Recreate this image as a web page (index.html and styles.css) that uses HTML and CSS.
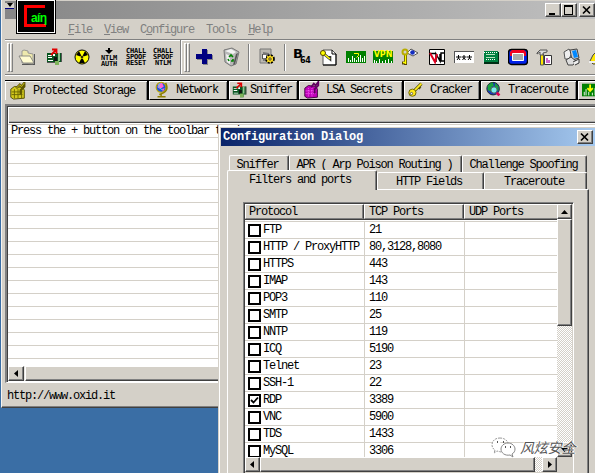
FILE: index.html
```html
<!DOCTYPE html>
<html lang="en">
<head>
<meta charset="utf-8">
<title>Cain</title>
<link rel="stylesheet" href="styles.css">
</head>
<body>
<div class="desktop">
<main class="window">
  <header class="titlebar">
    <i class="sysmenu"></i>
    <span class="winbtns"><b><svg width="14" height="13" viewBox="0 0 14 13"><path d="M3 9h6v2H3z"/></svg></b><b><svg width="14" height="13" viewBox="0 0 14 13"><path d="M2 1h9v10H2zM3 3v7h7V3z" fill-rule="evenodd"/></svg></b><b class="close"><svg width="14" height="13" viewBox="0 0 14 13"><path d="M3 2.500l7 7M10 2.500l-7 7" stroke="#000" stroke-width="1.700"/></svg></b></span>
  </header>
  <div class="logo"><svg width="40" height="34" viewBox="0 0 40 34"><path d="M29 7.500H9.500V26.500H30" fill="none" stroke="#f00" stroke-width="3"/></svg><span>aíη</span></div>
  <nav class="menu"><span><u>F</u>ile</span><span><u>V</u>iew</span><span>C<u>o</u>nfigure</span><span>Tools</span><span><u>H</u>elp</span></nav>
  <div class="toolbar">
    <i class="grip"></i><i class="grip"></i>
    <div class="group first">
      <svg class="ic" viewBox="0 0 20 20"><path d="M4 17h12V7h1v11H4z" fill="#555"/><path d="M4 16V4l2-1 4 1v2l5 1v10z" fill="#eee9ad" stroke="#888" stroke-width=".8"/><path d="M1 9h11l4 7H5z" fill="#fffbd0" stroke="#777" stroke-width=".8"/></svg>
      <svg class="ic" viewBox="0 0 20 20"><path d="M2 6h15v9h-3v3h-4v-3H2z" fill="#07551f"/><path d="M3 8h4v1H3zM3 10h4v1H3zM3 13h5v1H3zM8 7h2v2H8z" fill="#fff"/><path d="M9 10h3v4H9z" fill="#111"/><path d="M13 6h2v8h-2z" fill="#8fc28f"/><path d="M16 6h1v9h-1zM2 15h8v1H2z" fill="#555"/><path d="M10 14h4v4h-4z" fill="#7fb45c"/><path d="M6 8l5-5M7 2.500h4.500V7" fill="none" stroke="#e00000" stroke-width="1.800"/></svg>
      <svg class="ic" viewBox="0 0 20 20"><circle cx="10" cy="10" r="7" fill="#ff0" stroke="#000"/><path d="M10 10L4 8l3-4zM10 10l6-2-3-4zM10 10l-3 6h6z"/><circle cx="10" cy="10" r="1.500" stroke="#ff0" stroke-width=".6"/></svg>
      <span class="tiny ntlm"><svg width="8" height="6" viewBox="0 0 8 6"><path d="M3 0h2v2h3L4 6 0 2h3z"/></svg>NTLM<br>AUTH</span>
      <span class="tiny">CHALL<br>SPOOF<br>RESET</span>
      <span class="tiny">CHALL<br>SPOOF<br>NTLM</span>
    </div>
    <i class="sep split"></i><i class="grip"></i><i class="grip"></i>
    <div class="group second">
      <svg class="ic" viewBox="0 0 20 20"><path d="M9 3h5v5h5v5h-5v5H9v-5H3V8h6z" fill="#888"/><path d="M8 2h5v5h5v5h-5v5H8v-5H2V7h6z" fill="#000080"/></svg>
      <svg class="ic" viewBox="0 0 20 20"><path d="M3 3l8-2 7 4-3 12-5 2-6-4z" fill="#b8b8b8" stroke="#777"/><path d="M4 4l6-2 5 3-3 2zM5 7l4 2v8l-3-2z" fill="#f2f2f2"/><path d="M15 7l2-1-3 11-2 1z" fill="#555"/><path d="M8 10l2-2 2 2m0 2v2h-2m-2 0l-1-2" fill="none" stroke="#008000" stroke-width="1.600"/></svg>
    </div>
    <i class="sep"></i>
    <svg class="ic lone" viewBox="0 0 20 20"><path d="M3 2h11v14H3z" fill="#bbb8b1" stroke="#777"/><path d="M5 7h4v5H5z" fill="#555"/><path d="M6 5l6 1v7l-6 1z" fill="#777"/><circle cx="13" cy="12" r="4" fill="#ffdf20" stroke="#000" stroke-width="1.700" stroke-dasharray="2 1.200"/><circle cx="13" cy="12" r="1.200" fill="#ddd" stroke="#554500"/><path d="M6 8h3v3H6z" fill="#fff"/></svg>
    <i class="sep"></i>
    <div class="group third">
      <span class="b64"><b>B</b><small>64</small></span>
      <svg class="ic" viewBox="0 0 20 20"><path d="M4 3h9l4 4v11H4z" fill="#fff" stroke="#555"/><path d="M13 3v4h4v11H4" fill="none" stroke="#000"/><path d="M5 7l6 5v-3" stroke="#333" stroke-width="2.600" fill="none"/><path d="M5 7l6 5" stroke="#ff0" stroke-width="1.500"/><circle cx="4" cy="6" r="2.500" fill="#ff0" stroke="#554500"/></svg>
      <svg class="ic" viewBox="0 0 20 20"><path d="M0 4h20v12H0z" fill="#008000"/><path d="M2.500 15v-4M4.500 15v-2M6.500 15V9M8.500 15v-4M10.500 15v-2M12.500 15v-5M14.500 15V8M16.500 15v-4M18.500 15v-6" stroke="#fff"/><path d="M8 6.500h4.500v2l-2 2" stroke="#ff0" fill="none"/></svg>
      <span class="vpn"><b>VPN</b><svg width="20" height="4" viewBox="0 0 20 4"><path d="M1.500 4V1M3.500 4V2M6.500 4V0M9.500 4V2M12.500 4V1M15.500 4V0M18.500 4V2" stroke="#fff"/></svg></span>
      <svg class="ic" viewBox="0 0 20 20"><path d="M7 6l4-4 7 4-5 3z" fill="#fff" stroke="#555"/><circle cx="12.500" cy="5.500" r="2.300" fill="#142dc0"/><path d="M5.500 7v11M5 16H2" stroke="#554500" stroke-width="3"/><path d="M5.500 7v10M5 15.500H3" stroke="#ff0" stroke-width="1.500"/><circle cx="5" cy="5" r="2.500" fill="none" stroke="#b8ac00" stroke-width="2"/></svg>
      <svg class="ic" viewBox="0 0 20 20"><path d="M2.500 2.500h15v15h-15z" fill="#fff" stroke="#000"/><path d="M3 6.500h6M9 15V7l4 7V7M18 6h-4v8h4" fill="none" stroke="#000" stroke-width="1.500"/><path d="M3 6l5 9 2-8" fill="none" stroke="#e00020" stroke-width="2"/></svg>
      <svg class="ic" viewBox="0 0 20 20"><path d="M0 4h20v12H0z" fill="#fff"/><path d="M0 4.500h20M.5 4v12" stroke="#555"/><path d="M2 10h5M4.500 8v3M3 13l1.500-2L6 13M7.500 10h5M10 8v3M8.500 13l1.500-2 1.500 2M13 10h5M15.500 8v3M14 13l1.500-2 1.500 2" stroke="#000" fill="none"/></svg>
      <svg class="ic" viewBox="0 0 20 20"><path d="M3 5h15v12H3z" fill="#002f15"/><path d="M2 4h15v11H2z" fill="#008040"/><path d="M3 5.500h13M5 12.500h9" stroke="#fff" stroke-dasharray="1 1"/><path d="M5 7.500h9M5 10.500h9" stroke="#b8e2be"/><path d="M2.500 4v12" stroke="#ddd"/></svg>
      <svg class="ic" viewBox="0 0 20 20"><rect x=".5" y="2.500" width="19" height="15" rx="3" fill="#0020e8" stroke="#000" stroke-width="1.400"/><path d="M2 9V5l2-2h12l2 2v4z" fill="#f00020"/><path d="M4.500 6.500h11v7h-11z" fill="#aaa" stroke="#fff"/></svg>
      <svg class="ic" viewBox="0 0 20 20"><path d="M5.500 7h3v11h-3z" fill="#ffe800" stroke="#555"/><path d="M2 6l3-3h7v2L8 6v2H5V5L2 7z" fill="#ddd" stroke="#555"/><path d="M9.500 8.500h7v9h-7z" fill="#fff" stroke="#333"/><path d="M12 16v-5M14 16v-3" stroke="#b000b0" stroke-width="1.200"/></svg>
      <svg class="ic" viewBox="0 0 20 20"><path d="M2 5l5-3 3 4-3 6H3z" fill="#eee" stroke="#555"/><path d="M8 3l7-1 2 9-7 2z" fill="#ccc" stroke="#444"/><path d="M10 4l4-1 2 7-4 1z" fill="#08f"/><path d="M4 13l5-3 5 4-3 4H6z" fill="#ddd" stroke="#444"/><path d="M11 15l6-3v4l-4 2" fill="#eee" stroke="#333"/></svg>
      <svg class="ic" viewBox="0 0 20 20"><path d="M4 8l4-4v13H4l-3-3z" fill="#ffe800" stroke="#444"/><path d="M0 15h10" stroke="#eee" stroke-width="2"/></svg>
    </div>
  </div>
  <div class="tabs">
    <div class="tab t1"><svg class="ic" viewBox="0 0 20 20"><path d="M2 8l4-3 9 1 2 3v9l-12 1-3-2z" fill="#d4ca1d" stroke="#4c4700"/><path d="M3 11h12M3 14h12M6 8v10M10 8v10M14 8v10" stroke="#6a6500"/><path d="M8 7l4-4 2 2 3-4v4l-4 4v5" fill="none" stroke="#5e5700" stroke-width="2.500"/><path d="M8 7l4-4 2 2 3-4" fill="none" stroke="#d4ca1d"/></svg><span>Protected Storage</span></div>
    <div class="tab t2"><svg class="ic" viewBox="0 0 20 20"><circle cx="9" cy="7" r="5.500" fill="#1b55df" stroke="#bca900" stroke-width="1.300"/><path d="M6 3l4-1 2 4-4 3-3-2zM10 9l3-1-2 4z" fill="#ff62d2"/><path d="M8 2l-2 4 4 4" stroke="#3fe5e0" fill="none"/><path d="M14 2q5 10-7 13M9 14v3M5 17.500h9" fill="none" stroke="#8d7f00" stroke-width="1.700"/></svg><span>Network</span></div>
    <div class="tab t3"><svg class="ic" viewBox="0 0 20 20"><path d="M2 6h15v9h-3v3h-4v-3H2z" fill="#07551f"/><path d="M3 8h4v1H3zM3 10h4v1H3zM3 13h5v1H3zM8 7h2v2H8z" fill="#fff"/><path d="M9 10h3v4H9z" fill="#111"/><path d="M13 6h2v8h-2z" fill="#8fc28f"/><path d="M16 6h1v9h-1z" fill="#555"/><path d="M10 14h4v4h-4z" fill="#7fb45c"/><path d="M6 8l5-5M7 2.500h4.500V7" fill="none" stroke="#e00000" stroke-width="1.800"/></svg><span>Sniffer</span></div>
    <div class="tab t4"><svg class="ic" viewBox="0 0 20 20"><path d="M2 8l4-3 8 1 2 3v9l-11 1-3-2z" fill="#c000b8" stroke="#390038"/><path d="M3 11h12M3 14h12M6 8v10M10 8v10" stroke="#ff71ff" stroke-dasharray="1 1"/><path d="M9 7l3-4 2 2 3-4v4l-4 4v5" fill="none" stroke="#600060" stroke-width="2"/></svg><span>LSA Secrets</span></div>
    <div class="tab t5"><svg class="ic" viewBox="0 0 20 20"><path d="M8 11l8-8M12 6l3 2" stroke="#554f00" stroke-width="3.500"/><path d="M8 11l8-8" stroke="#ffed20" stroke-width="2"/><circle cx="6" cy="13" r="4" fill="#ffe818" stroke="#655d00"/><circle cx="5" cy="14" r="1.300" fill="#fff" stroke="#555"/></svg><span>Cracker</span></div>
    <div class="tab t6"><svg class="ic" viewBox="0 0 20 20"><circle cx="9" cy="8.500" r="7" fill="#1739b8" stroke="#222"/><path d="M3 5l5-4 2 4-3 2v5l-4-2zM11 2l4 4v5l-4-2z" fill="#17a23b"/><circle cx="10" cy="10" r="3.500" fill="#76efed" stroke="#555"/><path d="M13 13l3 3" stroke="#e00050" stroke-width="3"/></svg><span>Traceroute</span></div>
    <div class="tab t7"><svg class="ic" viewBox="0 0 20 20"><path d="M0 3h20v14H0z" fill="#008000"/><path d="M2.500 16v-4M4.500 16v-7M7.500 16v-4M11.500 16v-3M14.500 16V8" stroke="#fff"/><path d="M9 4v6M6 8l3 3 3-3" stroke="#ff0" stroke-width="2" fill="none"/></svg></div>
  </div>
  <section class="listview">
    <div class="lhead"></div>
    <div class="lrows"><p>Press the + button on the toolbar to dump</p></div>
    <div class="hscroll"><b class="sb"><svg width="15" height="14" viewBox="0 0 15 14"><path d="M9 3v7L5 6.500z"/></svg></b><b class="thumb"></b></div>
  </section>
  <footer>http://www.oxid.it</footer>
</main>

<section class="dialog">
  <header><span>Configuration Dialog</span><b class="close"><svg width="14" height="13" viewBox="0 0 14 13"><path d="M3 2.500l7 7M10 2.500l-7 7" stroke="#000" stroke-width="1.700"/></svg></b></header>
  <div class="dtabs upper"><span>Sniffer</span><span>APR ( Arp Poison Routing )</span><span>Challenge Spoofing</span></div>
  <div class="dtabs lower"><span class="active">Filters and ports</span><span>HTTP Fields</span><span>Traceroute</span></div>
  <div class="panel">
    <div class="table">
      <div class="viewport">
        <div class="thead"><span>Protocol</span><span>TCP Ports</span><span>UDP Ports</span></div>
        <div class="tbody">
          <div class="row"><span><i class="cb"></i>FTP</span><span>21</span><span></span></div>
          <div class="row"><span><i class="cb"></i>HTTP / ProxyHTTP</span><span>80,3128,8080</span><span></span></div>
          <div class="row"><span><i class="cb"></i>HTTPS</span><span>443</span><span></span></div>
          <div class="row"><span><i class="cb"></i>IMAP</span><span>143</span><span></span></div>
          <div class="row"><span><i class="cb"></i>POP3</span><span>110</span><span></span></div>
          <div class="row"><span><i class="cb"></i>SMTP</span><span>25</span><span></span></div>
          <div class="row"><span><i class="cb"></i>NNTP</span><span>119</span><span></span></div>
          <div class="row"><span><i class="cb"></i>ICQ</span><span>5190</span><span></span></div>
          <div class="row"><span><i class="cb"></i>Telnet</span><span>23</span><span></span></div>
          <div class="row"><span><i class="cb"></i>SSH-1</span><span>22</span><span></span></div>
          <div class="row"><span><i class="cb"><svg width="9" height="9" viewBox="0 0 9 9"><path d="M1 4l2.500 2.500L8 1.500" fill="none" stroke="#000" stroke-width="1.800"/></svg></i>RDP</span><span>3389</span><span></span></div>
          <div class="row"><span><i class="cb"></i>VNC</span><span>5900</span><span></span></div>
          <div class="row"><span><i class="cb"></i>TDS</span><span>1433</span><span></span></div>
          <div class="row"><span><i class="cb"></i>MySQL</span><span>3306</span><span></span></div>
        </div>
      </div>
      <div class="vscroll"><b class="sb"><svg width="14" height="14" viewBox="0 0 14 14"><path d="M3 9h7L6.500 5z"/></svg></b><b class="thumb"></b><b class="sb end"><svg width="14" height="14" viewBox="0 0 14 14"><path d="M3 5h7L6.500 9z"/></svg></b></div>
      <div class="hscroll"><b class="sb"><svg width="14" height="13" viewBox="0 0 14 13"><path d="M8 3v7L4 6.500z"/></svg></b><b class="thumb"></b><b class="sb end"><svg width="14" height="13" viewBox="0 0 14 13"><path d="M5 3v7l4-3.500z"/></svg></b></div>
      <div class="corner"></div>
    </div>
  </div>
</section>
<div class="watermark"><svg width="26" height="22" viewBox="0 0 26 22"><path d="M9 1c-5 0-8 3-8 7 0 2 1 4 3 5l-1 3 3-2 4 1" fill="#fff" stroke="#999" stroke-dasharray="2 1"/><path d="M9 1c4 0 7 2 8 5" fill="none" stroke="#999" stroke-dasharray="2 1"/><path d="M17 6c4 0 7 3 7 6 0 2-1 4-3 5l1 3-3-2c-5 1-9-2-9-6 0-3 3-6 7-6z" fill="#fff" stroke="#888"/><path d="M6 4h1v2H6zM12 4h1v2h-1zM14 9h1v2h-1zM19 9h1v2h-1z" fill="#555"/></svg><span>风炫安全</span></div>
</div>
</body>
</html>
```
FILE: styles.css
```css
* { box-sizing: border-box; }
body { margin: 0; background: #3a6ea5; }
.desktop {
  position: relative; width: 595px; height: 473px; overflow: hidden;
  background: #3a6ea5; color: #000;
  font: 12px/14px "Liberation Mono", "Noto Sans CJK SC", monospace;
  letter-spacing: -1.2px; white-space: nowrap;
}
svg { display: block; }
.window {
  position: relative; display: flex; flex-direction: column;
  margin-left: 1px; width: 600px; height: 408px;
  background: #d4d0c8; border-left: 1px solid #f5f3ef; border-bottom: 1px solid #404040;
  box-shadow: inset 0 -1px #808080;
}
.titlebar {
  display: flex; justify-content: space-between; align-items: flex-start;
  flex: none; height: 18px; margin: 1px 0 0 3px; padding-top: 2px;
  background: linear-gradient(90deg, #868686, #c0c0c0);
}
.sysmenu { width: 9px; height: 6px; background: #d4d0c8; border-bottom: 1px solid #000080; }
.sysmenu::before { content: ""; display: block; width: 0; margin-left: 2px; border: 3px solid transparent; border-top: 4px solid #000; }
.winbtns { display: flex; margin-right: 6px; }
.winbtns b, .dialog .close {
  width: 16px; height: 14px; background: #d4d0c8;
  border: 1px solid; border-color: #fff #404040 #404040 #fff; box-shadow: inset -1px -1px #808080;
}
.winbtns .close { margin-left: 2px; }
.logo {
  position: absolute; left: 14px; top: -1px; width: 40px; height: 35px;
  background: #000; border: 1px solid #000; box-shadow: inset 0 0 0 1px #fff;
}
.logo svg { position: absolute; left: -1px; top: -1px; }
.logo span {
  position: absolute; left: 14px; top: 11px; color: #0f0;
  font: bold 12px/14px "Liberation Sans", sans-serif; letter-spacing: -.6px;
}
.menu { display: flex; flex: none; height: 20px; padding: 4px 0 0 66px; gap: 12px; color: #808080; }
.menu u { text-underline-offset: 1px; }
.toolbar {
  display: flex; align-items: center; flex: none; height: 36px;
  margin-left: 3px; border-top: 1px solid #808080; border-bottom: 1px solid #808080;
  box-shadow: inset 0 1px #fff, 0 1px #fff;
}
.grip { flex: none; width: 3px; height: 29px; border: 1px solid; border-color: #fff #808080 #808080 #fff; }
.toolbar > .grip:first-child { margin-left: 2px; }
.group { display: flex; flex: none; align-items: center; }
.group > * { flex: none; width: 20px; margin-right: 7px; }
.ic { width: 20px; height: 20px; flex: none; }
.first { margin-left: 5px; width: 162px; }
.tiny { font: bold 7px/6px "DejaVu Sans Mono", monospace; letter-spacing: -.25px; text-align: center; }
.tiny svg { margin: 0 auto 1px; }
.sep { flex: none; width: 2px; height: 27px; border-left: 1px solid #808080; border-right: 1px solid #fff; }
.split { height: 34px; margin: 0 2px 0 0; }
.second { margin-left: 4px; width: 54px; }
.lone { margin: 0 7px 0 7px; }
.third { margin-left: 6px; }
.b64 { display: flex; font: bold 13px/14px "DejaVu Sans", sans-serif; letter-spacing: 0; height: 20px; }
.b64 b { margin-left: 1px; }
.b64 small { font-size: 8px; margin: 7px 0 0 -3px; letter-spacing: -.3px; }
.vpn { height: 12px; background: #008000; color: #ff0; text-align: center; font: bold 8px/8px "DejaVu Sans", sans-serif; letter-spacing: 0; }
.tabs { display: flex; flex: none; height: 20px; margin: 5px 0 0 3px; border-top: 1px solid #000; }
.tab {
  display: flex; flex: none; align-items: center; gap: 4px; padding-left: 2px;
  background: #d4d0c8; border-left: 1px solid #fff; border-right: 2px solid #000;
  border-bottom: 1px solid #000; box-shadow: inset 0 1px #fff, inset -1px 0 #808080;
}
.tab svg { height: 18px; }
.t1 { width: 144px; gap: 5px; border-bottom: 0; }
.t2 { width: 80px; }
.t3 { width: 70px; gap: 0; padding-left: 0; }
.t4 { width: 105px; }
.t5 { width: 77px; padding-left: 1px; }
.t6 { width: 97px; }
.t7 { width: 30px; }
.listview {
  display: flex; flex-direction: column; flex: none; height: 279px; margin: 4px 0 0 3px;
  border: 1px solid #808080; border-bottom-color: #fff; border-width: 2px 0 1px 2px;
  padding-bottom: 1px; background: #fff; box-shadow: inset 1px 1px #404040;
}
.lhead { flex: none; height: 15px; margin: 2px 0 0 2px; background: #d4d0c8; border-bottom: 1px solid #404040; box-shadow: inset 0 -1px #aaa; }
.lrows {
  flex: 1; margin: 1px 0 0 1px;
  background: repeating-linear-gradient(#fff 0 12px, #d4d0c8 12px 13px);
  border-top: 1px solid #d4d0c8;
}
.lrows p { margin: 0 0 0 3px; line-height: 13px; }
.hscroll { display: flex; height: 15px; background: #eae8e4; }
.sb, .thumb {
  flex: none; background: #d4d0c8; border: 1px solid; border-color: #fff #404040 #404040 #fff;
  box-shadow: inset -1px -1px #808080;
}
.listview .hscroll { margin-left: 1px; }
.listview .sb { width: 16px; }
.listview .thumb { flex: 1; margin-left: 1px; }
footer { padding: 6px 0 0 5px; }
.dialog {
  position: absolute; left: 218px; top: 126px; width: 380px; height: 360px;
  background: #d4d0c8; border-left: 1px solid #d4d0c8; box-shadow: inset 1px 1px #fff;
  padding: 2px 0 0 2px;
}
.dialog header {
  display: flex; justify-content: space-between; height: 18px; padding: 2px 5px 0 2px;
  color: #fff; background: linear-gradient(90deg, #0a246a, #a6caf0);
}
.dialog header span { font-weight: bold; letter-spacing: -.2px; }
.dtabs { display: flex; text-align: center; }
.dtabs span {
  flex: none; border: 1px solid; border-color: #fff #404040 transparent #fff; border-bottom: 0;
  border-radius: 2px 2px 0 0; box-shadow: inset -1px 0 #808080;
}
.upper { margin: 9px 0 0 8px; height: 15px; }
.upper span { height: 17px; line-height: 18px; }
.upper span:nth-child(1) { width: 60px; padding-right: 3px; }
.upper span:nth-child(2) { width: 173px; padding-right: 2px; }
.upper span:nth-child(3) { width: 125px; padding-right: 2px; }
.lower { position: relative; height: 19px; margin-left: 6px; align-items: flex-end; }
.lower span { height: 17px; line-height: 18px; background: #d4d0c8; padding-right: 3px; }
.lower .active { height: 20px; width: 150px; line-height: 18px; padding-right: 4px; margin-bottom: -1px; }
.lower span:nth-child(2) { width: 107px; }
.lower span:nth-child(3) { width: 103px; }
.panel {
  width: 362px; height: 300px; margin-left: 6px; padding: 12px 0 0 15px;
  border: 1px solid; border-color: #fff #404040 #404040 #fff; box-shadow: inset -1px 0 #808080;
}
.table {
  display: grid; grid-template: 253px 15px / 312px 15px; width: 331px; height: 272px;
  border: 1px solid; border-color: #808080 #fff #fff #808080; box-shadow: inset 1px 1px #404040;
  padding: 1px;
}
.viewport { overflow: hidden; background: #fff; }
.thead { display: flex; height: 16px; border-bottom: 1px solid #404040; }
.thead span {
  flex: none; width: 100px; padding-left: 4px; line-height: 15px; background: #d4d0c8;
  border: 1px solid; border-color: #fff #404040 #808080 #fff; box-shadow: inset -1px 0 #808080;
}
.thead span:first-child { width: 119px; padding-left: 3px; }
.tbody { border-top: 1px solid #d4d0c8; margin-top: 1px; }
.row { display: flex; height: 17px; border-bottom: 1px solid #d4d0c8; line-height: 17px; }
.row > span { flex: none; width: 100px; padding-left: 4px; border-right: 1px solid #d4d0c8; }
.row > span:first-child { display: flex; align-items: center; gap: 2px; width: 120px; padding-left: 3px; }
.cb { flex: none; width: 13px; height: 13px; border: 2px solid #000; background: #fff; }
.vscroll, .table .hscroll { background: repeating-conic-gradient(#fff 0 25%, #d4d0c8 0 50%) 0 0 / 2px 2px; }
.vscroll { display: flex; flex-direction: column; }
.vscroll .sb { height: 15px; }
.vscroll .thumb { height: 107px; }
.vscroll .end { margin-top: auto; }
.table .sb { width: 15px; }
.table .hscroll .thumb { width: 275px; }
.hscroll .end { margin-left: auto; }
.corner { background: #d4d0c8; }
.watermark {
  position: absolute; left: 491px; top: 437px; display: flex; align-items: center; gap: 3px;
  font: italic 14px/20px "Noto Sans CJK SC", sans-serif; letter-spacing: -.2px;
  color: #555; text-shadow: 1px 0 #fff, -1px 0 #fff;
}
.watermark span { margin-top: -2px; }
```
